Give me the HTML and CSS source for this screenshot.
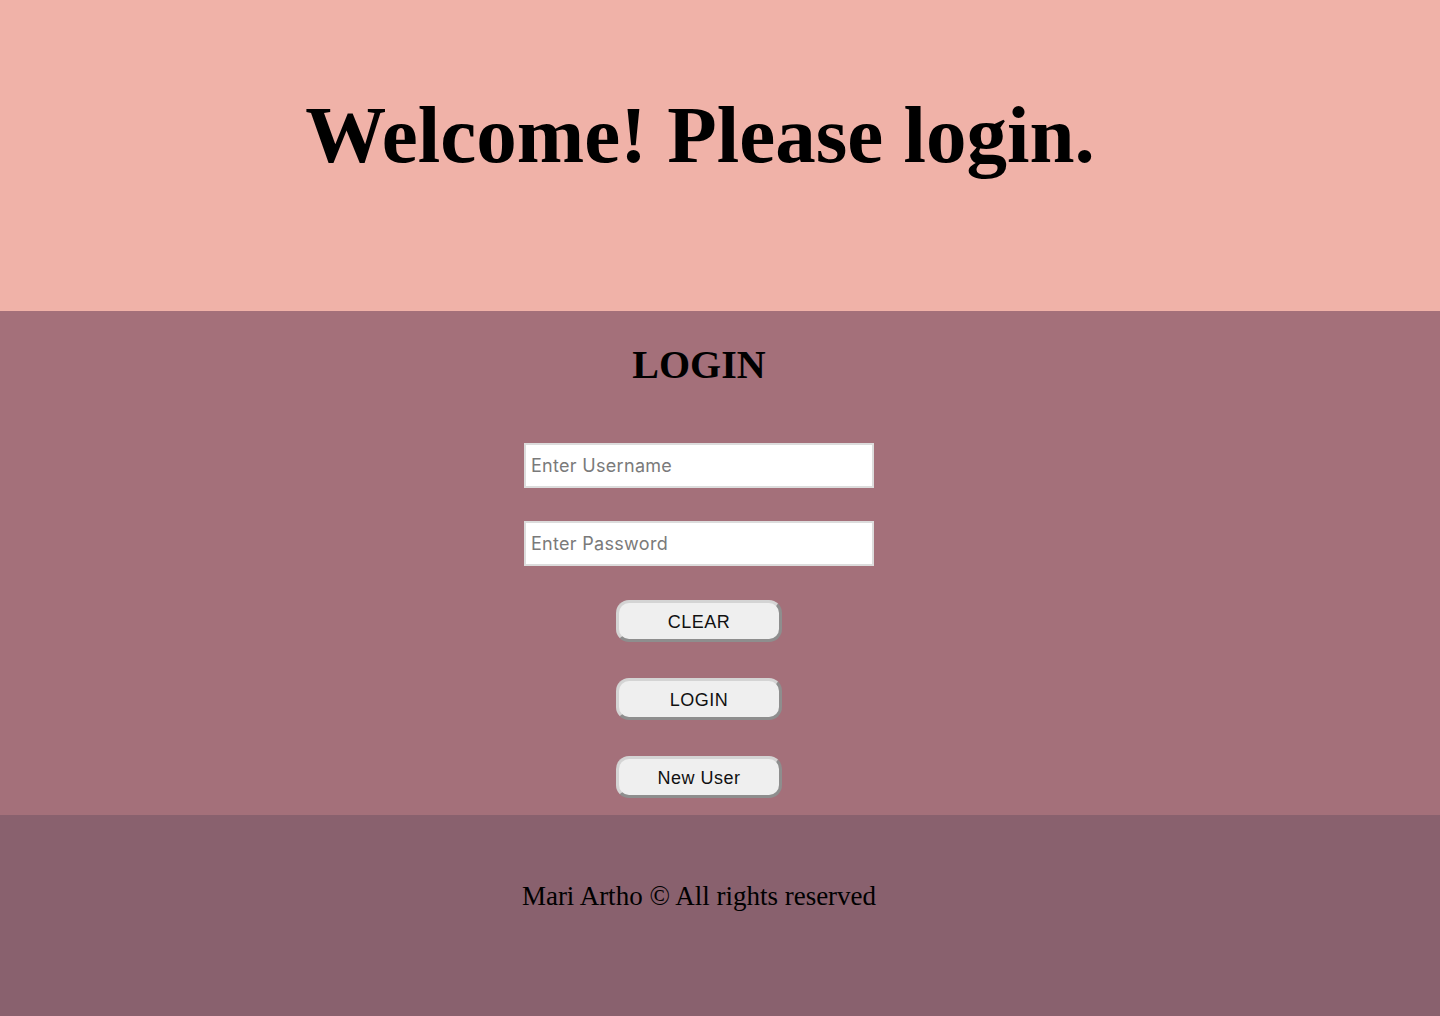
FILE: index.html
```html
<!DOCTYPE html>
<html lang="en">
<head>
<meta charset="utf-8">
<title>Login</title>
<link rel="stylesheet" href="styles.css">
</head>
<body>
<header class="hero">
  <h1 class="hero-title">Welcome! Please login.</h1>
</header>
<main class="login">
  <h2 class="login-title">LOGIN</h2>
  <form class="login-form">
    <input class="field" type="text" placeholder="Enter Username">
    <input class="field" type="password" placeholder="Enter Password">
    <button class="btn" type="reset">CLEAR</button>
    <button class="btn" type="button">LOGIN</button>
    <button class="btn" type="button">New User</button>
  </form>
</main>
<footer class="footer">
  <p class="footer-text">Mari Artho © All rights reserved</p>
</footer>
</body>
</html>
```
FILE: styles.css
```css
* { box-sizing: border-box; }
html, body { margin: 0; padding: 0; }
body {
  font-family: "Liberation Serif", "Times New Roman", serif;
  color: #000;
  background: #89616e;
}
.hero {
  height: 311px;
  background: #f0b2a8;
  padding-top: 95px;
  padding-right: 40px;
}
.hero-title {
  margin: 0;
  text-align: center;
  font-size: 81px;
  line-height: 81px;
  font-weight: bold;
}
.login {
  height: 504px;
  background: #a4707a;
  padding-top: 34px;
  padding-right: 42px;
  display: flex;
  flex-direction: column;
  align-items: center;
}
.login-title {
  margin: 0;
  font-size: 40px;
  line-height: 40px;
  font-weight: bold;
}
.login-form {
  margin-top: 58px;
  display: flex;
  flex-direction: column;
  align-items: center;
}
.field {
  width: 350px;
  height: 45px;
  border: 2px solid #dcdcdc;
  background: #fff;
  padding: 0 5px;
  font-family: Inter, "Liberation Sans", Arial, sans-serif;
  font-size: 18px;
  letter-spacing: 0.3px;
  color: #333;
  margin-bottom: 33px;
  outline: none;
}
.field::placeholder { color: #7a7a7a; }
.field + .field { margin-bottom: 34px; }
.btn {
  width: 166px;
  height: 42px;
  margin-bottom: 36px;
  background: #efefef;
  border: 3px solid;
  border-color: #d4d4d4 #8e8e8e #8e8e8e #d4d4d4;
  border-radius: 13px;
  font-family: "Liberation Sans", Arial, sans-serif;
  font-size: 18px;
  color: #111;
  letter-spacing: 0.5px;
  padding: 2px 0 0;
}
.btn:last-child { margin-bottom: 0; }
.footer {
  height: 201px;
  background: #89616e;
  padding-top: 68px;
  padding-right: 42px;
}
.footer-text {
  margin: 0;
  text-align: center;
  font-size: 27px;
  line-height: 27px;
}
```
